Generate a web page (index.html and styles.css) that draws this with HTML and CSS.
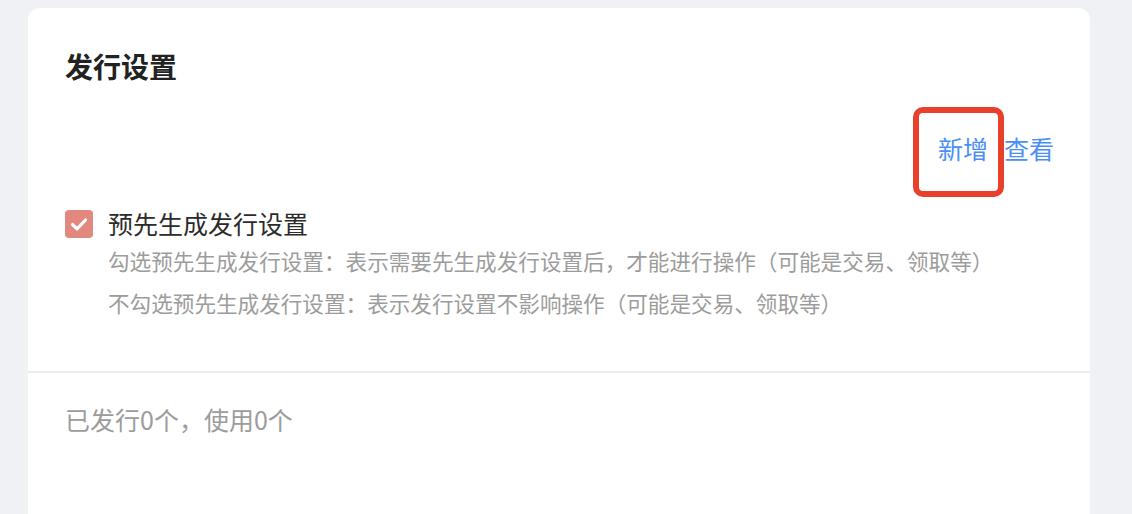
FILE: index.html
```html
<!DOCTYPE html>
<html lang="zh-CN">
  <head>
    <meta charset="UTF-8" />
    <meta name="viewport" content="width=device-width, initial-scale=1.0" />
    <title>发行设置</title>
    <link rel="stylesheet" href="styles.css">
  </head>
  <body>
    <div class="card">
      <div class="card-body">
        <h2 class="card-title">发行设置</h2>

        <div class="actions">
          <a class="link link-add" href="#">新增<span class="highlight"></span></a>
          <a class="link" href="#">查看</a>
        </div>

        <label class="option">
          <span class="checkbox">
            <svg viewBox="0 0 28 28" width="28" height="28">
              <path d="M7.5 14.5 L12 18.8 L20.5 10" fill="none" stroke="#fff" stroke-width="3.2" stroke-linecap="round" stroke-linejoin="round" />
            </svg>
          </span>
          <span class="option-label">预先生成发行设置</span>
        </label>

        <div class="option-desc">
          <p>勾选预先生成发行设置：表示需要先生成发行设置后，才能进行操作（可能是交易、领取等）</p>
          <p>不勾选预先生成发行设置：表示发行设置不影响操作（可能是交易、领取等）</p>
        </div>
      </div>

      <div class="card-footer">已发行0个，使用0个</div>
    </div>
  </body>
</html>
```

FILE: styles.css
```css
body {
  margin: 0;
  background: #f0f1f4;
  font-family: "Noto Sans CJK SC", "Noto Sans", sans-serif;
  color: #333;
}

.card {
  margin: 8px 42px 0 28px;
  background: #fff;
  border-radius: 12px;
  min-height: 520px;
}

.card-body {
  padding: 38px 36px 47px 37px;
  border-bottom: 2px solid #ebebeb;
}

.card-title {
  margin: 0;
  font-size: 28px;
  line-height: 40px;
  font-weight: bold;
  color: #222;
}

.actions {
  display: flex;
  justify-content: flex-end;
  gap: 16px;
  margin-top: 44px;
}

.link {
  font-size: 25px;
  line-height: 36px;
  color: #4a8ff5;
  text-decoration: none;
}

.link-add {
  position: relative;
}

/* red annotation box around 新增 */
.highlight {
  position: absolute;
  top: -23px;
  left: -25px;
  right: -16px;
  bottom: -31px;
  border: 6px solid #e8402b;
  border-radius: 10px;
}

.option {
  display: flex;
  align-items: center;
  gap: 15px;
  margin-top: 39px;
  line-height: 36px;
}

.checkbox {
  display: flex;
  width: 28px;
  height: 28px;
  margin-top: 2px;
  border-radius: 4px;
  background: #e2887f;
}

.option-label {
  font-size: 25px;
  color: #2b2b2b;
}

.option-desc {
  padding-left: 43px;
  margin-top: -1px;
}

.option-desc p {
  margin: 0;
  font-size: 21.6px;
  line-height: 42px;
  color: #9c9c9c;
}

.card-footer {
  padding: 28px 37px 32px;
  font-size: 25px;
  line-height: 36px;
  color: #9c9c9c;
}
```
